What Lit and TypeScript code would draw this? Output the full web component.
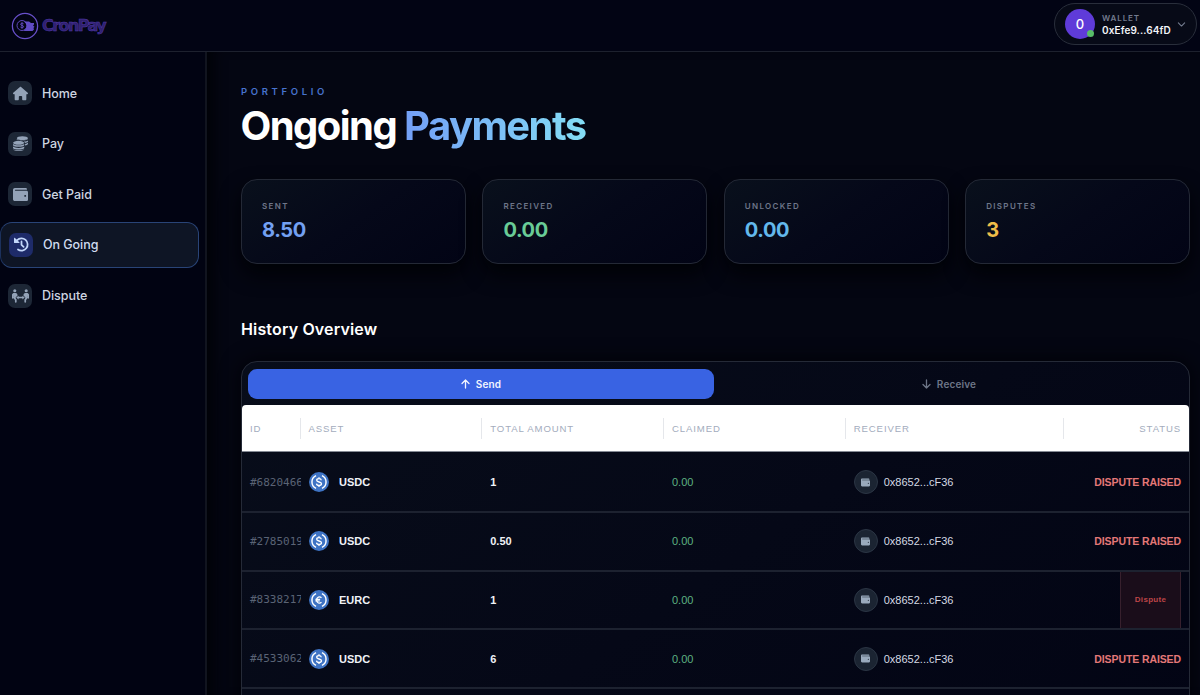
import { LitElement, html, css, svg } from "lit";
import { customElement } from "lit/decorators.js";

const WALLET = svg`<path d="M461.2 128H80c-8.84 0-16-7.16-16-16s7.16-16 16-16h384c8.84 0 16-7.16 16-16 0-26.51-21.49-48-48-48H64C28.65 32 0 60.65 0 96v320c0 35.35 28.65 64 64 64h397.2c28.02 0 50.8-21.53 50.8-48V176c0-26.47-22.78-48-50.8-48zM416 336c-17.67 0-32-14.33-32-32s14.33-32 32-32 32 14.33 32 32-14.33 32-32 32z"/>`;
const HOME = svg`<path d="M575.8 255.5c0 18-15 32.1-32 32.1h-32l.7 160.2c0 2.700-.2 5.400-.5 8.100V472c0 22.100-17.900 40-40 40H456c-1.100 0-2.200 0-3.300-.1-1.400.1-2.800.1-4.200.1H392c-22.100 0-40-17.900-40-40v-88c0-17.700-14.300-32-32-32h-64c-17.700 0-32 14.300-32 32v88c0 22.100-17.900 40-40 40h-56c-1.500 0-3-.1-4.500-.2-1.200.1-2.400.2-3.600.2h-16c-22.100 0-40-17.900-40-40V360c0-.9 0-1.900.1-2.800v-69.600H32c-18 0-32-14-32-32.100 0-9 3-17 10-24L266.400 8c7-7 15-8 22-8s15 2 21 7l255.400 224.500c8 7 12 15 11 24z"/>`;
const HISTORY = svg`<g fill="none" stroke="currentColor" stroke-width="60" stroke-linecap="round" stroke-linejoin="round"><path d="M108 108A209 209 0 1 1 136 428"/><path d="M256 150v116l72 68"/></g><path d="M24 28c-14-10-24-2-24 14v142c0 14 10 24 24 24h142c22 0 30-16 16-32z"/>`;
const COINS = svg`<g><ellipse cx="320" cy="72" rx="190" ry="66"/><path d="M130 104v42c40-8 90-8 140 6 100-4 210-14 240-52V72c-20 50-90 70-190 70-90 0-160-14-190-38zM370 190c20 14 34 32 38 52 50-8 84-20 104-44v-44c-30 26-80 34-142 36zM412 276v46c48-8 84-24 100-48v-44c-24 24-58 38-100 46z"/><ellipse cx="192" cy="232" rx="190" ry="66"/><path d="M0 270c60 60 324 60 384 0v46c-20 70-364 70-384 0zM0 362c60 60 324 60 384 0v46c-20 70-364 70-384 0zM0 452c60 44 324 44 384 0v0c-20 80-364 80-384 0z"/></g>`;
const PEOPLE = svg`<circle cx="105" cy="58" r="58"/><circle cx="535" cy="58" r="58"/><path d="M80 140h50c48 0 76 30 76 80v30l-66 50v44l34 40v98c0 40-64 40-64 0v-72l-50-58c-10-14-16-28-16-44v-60c-8 20-4 50 2 76 4 42-44 40-50 8C-20 220 4 140 80 140zM560 140h-50c-48 0-76 30-76 80v30l66 50v44l-34 40v98c0 40 64 40 64 0v-72l50-58c10-14 16-28 16-44v-60c8 20 4 50-2 76-4 42 44 40 50 8 16-112-8-192-84-192z"/><path d="M160 314l88-72v46h144v-46l88 72-88 72v-46H248v46z"/>`;
const icon = (shape: unknown, box: string, cls = "ico") =>
  html`<svg class=${cls} viewBox=${box} fill="currentColor">${shape}</svg>`;

const NAV = [
  { label: "Home", shape: HOME, box: "0 0 576 512" },
  { label: "Pay", shape: COINS, box: "0 0 512 512" },
  { label: "Get Paid", shape: WALLET, box: "0 0 512 512" },
  { label: "On Going", shape: HISTORY, box: "0 0 512 512", active: true },
  { label: "Dispute", shape: PEOPLE, box: "0 0 640 512", wide: true },
];
const STATS = [
  ["Sent", "8.50", "blue"],
  ["Received", "0.00", "green"],
  ["Unlocked", "0.00", "sky"],
  ["Disputes", "3", "amber"],
];
const ROWS = [
  ["#68204661", "USDC", "1", true],
  ["#27850193", "USDC", "0.50", true],
  ["#83382174", "EURC", "1", false],
  ["#45330628", "USDC", "6", true],
] as [string, string, string, boolean][];

const coin = (asset: string) => html`<svg class="coin" viewBox="0 0 32 32">
  <circle cx="16" cy="16" r="16" fill="#3e73c4" />
  <g fill="none" stroke="#fff" stroke-width="2.300">
    <path d="M11.300 5.800a11.200 11.200 0 0 0 0 20.400M20.700 5.800a11.200 11.200 0 0 1 0 20.400" />
    ${asset === "EURC"
      ? svg`<path d="M20 12.400a4.800 4.800 0 1 0 0 7.200M10.300 14.800h7.500M10.300 17.400h7" stroke-width="2"/>`
      : svg`<path d="M16 8.200v2.500M16 21.300v2.500M19.700 13.200c-.3-1.700-1.800-2.500-3.700-2.500-2.100 0-3.700 1-3.700 2.600 0 3.800 7.700 1.600 7.700 5.400 0 1.700-1.700 2.600-4 2.600s-3.800-1-4-2.800" stroke-width="2.100"/>`}
  </g>
</svg>`;

@customElement("app-root")
export class AppRoot extends LitElement {
  static styles = css`
    :host { display: flex; flex-direction: column; height: 695px; overflow: hidden; background: #030511; color: #fff; font-family: Inter, sans-serif; }
    * { box-sizing: border-box; }
    .top { height: 52px; flex: none; display: flex; justify-content: space-between; align-items: flex-start; padding: 3px 3px 0 11px; border-bottom: 1px solid #1d212e; background: #020414; }
    .brand { display: flex; align-items: center; gap: 3px; padding-top: 8px; }
    .logo { width: 28px; height: 28px; display: block; }
    .word { font: 700 16px/28px "DejaVu Sans", sans-serif; letter-spacing: -1.550px; color: #30216d; -webkit-text-stroke: .5px #513aae; padding-top: 1px; }
    .wallet { width: 143px; height: 42px; border: 1px solid #292e3b; border-radius: 22px; display: flex; align-items: center; padding-left: 10px; background: #070a17; }
    .avatar { position: relative; width: 30px; height: 30px; border-radius: 50%; background: #5f3bd9; display: grid; place-items: center; font-size: 13px; font-weight: 500; line-height: 1; }
    .dot { position: absolute; right: 1px; bottom: 2px; width: 7px; height: 7px; border-radius: 50%; background: #58bd68; }
    .who { margin-left: 7px; width: 75px; padding-top: 1px; }
    .wl { font-size: 8px; line-height: 10px; font-weight: 600; letter-spacing: .9px; color: #747c8f; }
    .wa { font-size: 10px; line-height: 14px; font-weight: 600; color: #f2f4f8; letter-spacing: .1px; white-space: nowrap; }
    .chev { width: 9px; height: 9px; color: #747c8f; }
    .body { flex: 1; display: flex; min-height: 0; }
    .side { width: 207px; flex: none; border-right: 2px solid #11141f; padding: 18px 6px 0 0; background: #010312; }
    .nav { height: 46px; display: flex; align-items: center; gap: 10px; padding-left: 8px; margin-bottom: 4.500px; font-size: 12.500px; font-weight: 500; color: #ced5e1; letter-spacing: -.05px; }
    .nav.active { border: 1px solid #294477; border-left-color: #1c315c; border-radius: 12px; background: #0e1525; margin: 5px 0; margin-top: .5px; color: #d0dcf0; }
    .tile { width: 24px; height: 24px; border-radius: 7px; background: #1d2736; color: #94a3b8; display: grid; place-items: center; }
    .active .tile { background: #1e2b69; color: #c3d7fa; }
    .ico { width: 15px; height: 15px; display: block; }
    .ico.wide { width: 17px; height: 14px; }
    .main { flex: 1; min-width: 0; padding: 33px 10px 0 34px; background: #040612; box-shadow: inset 14px 0 14px -8px #010207; overflow: hidden; }
    .eyebrow { font-size: 9.500px; line-height: 14px; font-weight: 600; letter-spacing: 3.650px; color: #4773ce; }
    h1 { margin: 4px 0 0 -.5px; font-size: 40px; line-height: 46px; letter-spacing: -1.560px; font-weight: 720; white-space: nowrap; }
    .grad { background: linear-gradient(90deg, #739ff7, #84def5); -webkit-background-clip: text; background-clip: text; color: transparent; padding-right: 2px; }
    .stats { display: grid; grid-template-columns: repeat(4, 1fr); gap: 16.500px; margin-top: 30px; }
    .card { height: 85px; border: 1px solid #242936; border-radius: 16px; padding: 21px 20px; background: linear-gradient(145deg, #09101c, #050819 50%, #020415); box-shadow: 0 10px 20px #010206; }
    .lab { font-size: 8px; line-height: 11px; font-weight: 600; letter-spacing: 1.350px; text-transform: uppercase; color: #6e7689; }
    .val { font-size: 20px; line-height: 26px; font-weight: 650; margin-top: 5px; letter-spacing: -.4px; }
    .blue { color: #73a0f2; } .green { color: #69cc97; } .sky { color: #63b8eb; } .amber { color: #efbd49; }
    h2 { margin: 53px 0 0; font-size: 16px; line-height: 24px; font-weight: 600; letter-spacing: .15px; }
    .panel { margin-top: 20px; border: 1px solid #252a37; border-radius: 16px 16px 0 0; height: 420px; background: linear-gradient(145deg, #080d1a, #050817 50%, #020414); box-shadow: 0 0 20px #010206; }
    .tabs { display: flex; padding: 7px 5px 0 6px; height: 43px; }
    .tab { flex: 1; height: 30px; display: flex; align-items: center; justify-content: center; gap: 6px; font-size: 10px; font-weight: 600; color: #6d7587; border-radius: 9px; letter-spacing: .15px; }
    .tab.on { background: #3963e3; color: #f2f5ff; flex: none; width: 466px; }
    .arr { width: 9px; height: 10px; }
    .row { display: grid; grid-template-columns: 58.500px 181.750px 181.750px 181.750px 218px 1fr; height: 58.800px; align-items: center; border-bottom: 2px solid #1d2230; font: 11px/16px "Liberation Sans", Arial, sans-serif; color: #d5dae4; }
    .row > * { padding-left: 8px; min-width: 0; }
    .head { height: 47px; background: #fff; border-radius: 4px 4px 0 0; border-bottom: 1px solid #858a94; color: #a3acbd; font-size: 9.600px; letter-spacing: .87px; margin-bottom: 2px; }
    .head > * { height: 21px; line-height: 21px; border-right: 1px solid #e5e7eb; }
    .head > *:last-child { border-right: 0; }
    .head > *:last-child, .row > *:last-child { text-align: right; padding-right: 8px; }
    .id { font: 11px/16px "DejaVu Sans Mono", monospace; color: #5a6375; overflow: hidden; padding-top: 1px; }
    .cell { display: flex; align-items: center; }
    .coin { width: 20px; height: 20px; margin-right: 10.500px; }
    .b { font-weight: 700; color: #f0f2f7; }
    .claimed { color: #5cb182; }
    .badge { width: 24px; height: 24px; border-radius: 50%; border: 1px solid #2b3544; background: #1b2432; color: #9aaabd; display: grid; place-items: center; margin-right: 6px; }
    .mini { width: 9px; height: 9px; }
    .raised { font-weight: 700; font-size: 10.500px; letter-spacing: -.1px; color: #e47878; }
    .end { height: 100%; display: flex; justify-content: flex-end; }
    .btn { width: 61px; display: grid; place-items: center; background: #1a0d1a; border: 1px solid #37202d; border-width: 0 1px; color: #bd4548; font-size: 8px; font-weight: 700; letter-spacing: .3px; }
    .nav.active + .nav { margin-top: 1px; }
  `;
  render() {
    return html`
      <header class="top">
        <div class="brand">
          <svg class="logo" viewBox="0 0 28 28" fill="none" stroke="#6850ca">
            <circle cx="14" cy="14" r="12.600" stroke-width="1.300" />
            <path d="M14 9.500h4l2 1.500h3v1.500l-1 1 1.500 1.200-1 1.300.5 1.500-1.500 1.500h-9c4-3 4-6.500.5-9.500z" fill="#604bc5" stroke="none" />
            <circle cx="11" cy="13.500" r="5" stroke-width=".9" />
            <path d="M12.600 11.800c-.8-1-3-.7-3 .5 0 1.500 3 .8 3 2.300 0 1.300-2.300 1.500-3.200.4M11 10.300v6.400" stroke-width=".9" />
          </svg>
          <span class="word">CronPay</span>
        </div>
        <div class="wallet">
          <div class="avatar">0<i class="dot"></i></div>
          <div class="who"><div class="wl">WALLET</div><div class="wa">0xEfe9...64fD</div></div>
          <svg class="chev" viewBox="0 0 10 10" fill="none" stroke="currentColor" stroke-width="1.200" stroke-linecap="round" stroke-linejoin="round"><path d="M1.500 3.200 5 6.700l3.500-3.500" /></svg>
        </div>
      </header>
      <div class="body">
        <nav class="side">
          ${NAV.map((n) => html`<div class="nav ${n.active ? "active" : ""}"><span class="tile">${icon(n.shape, n.box, n.wide ? "ico wide" : "ico")}</span>${n.label}</div>`)}
        </nav>
        <main class="main">
          <div class="eyebrow">PORTFOLIO</div>
          <h1>Ongoing <span class="grad">Payments</span></h1>
          <div class="stats">
            ${STATS.map(([l, v, c]) => html`<div class="card"><div class="lab">${l}</div><div class="val ${c}">${v}</div></div>`)}
          </div>
          <h2>History Overview</h2>
          <section class="panel">
            <div class="tabs">
              <div class="tab on"><svg class="arr" viewBox="0 0 9 10" fill="none" stroke="currentColor" stroke-width="1.300" stroke-linecap="round" stroke-linejoin="round"><path d="M4.500 9V1M1 4.500 4.500 1 8 4.500" /></svg>Send</div>
              <div class="tab"><svg class="arr" viewBox="0 0 9 10" fill="none" stroke="currentColor" stroke-width="1.300" stroke-linecap="round" stroke-linejoin="round"><path d="M4.500 1v8M1 5.500 4.500 9 8 5.500" /></svg>Receive</div>
            </div>
            <div class="row head"><div>ID</div><div>ASSET</div><div>TOTAL AMOUNT</div><div>CLAIMED</div><div>RECEIVER</div><div>STATUS</div></div>
            ${ROWS.map(([id, asset, amt, raised]) => html`<div class="row">
              <div class="id">${id}</div>
              <div class="cell b">${coin(asset)}${asset}</div>
              <div class="b">${amt}</div>
              <div class="claimed">0.00</div>
              <div class="cell"><span class="badge">${icon(WALLET, "0 0 512 512", "mini")}</span>0x8652...cF36</div>
              ${raised ? html`<div class="raised">DISPUTE RAISED</div>` : html`<div class="end"><span class="btn">Dispute</span></div>`}
            </div>`)}
          </section>
        </main>
      </div>`;
  }
}
